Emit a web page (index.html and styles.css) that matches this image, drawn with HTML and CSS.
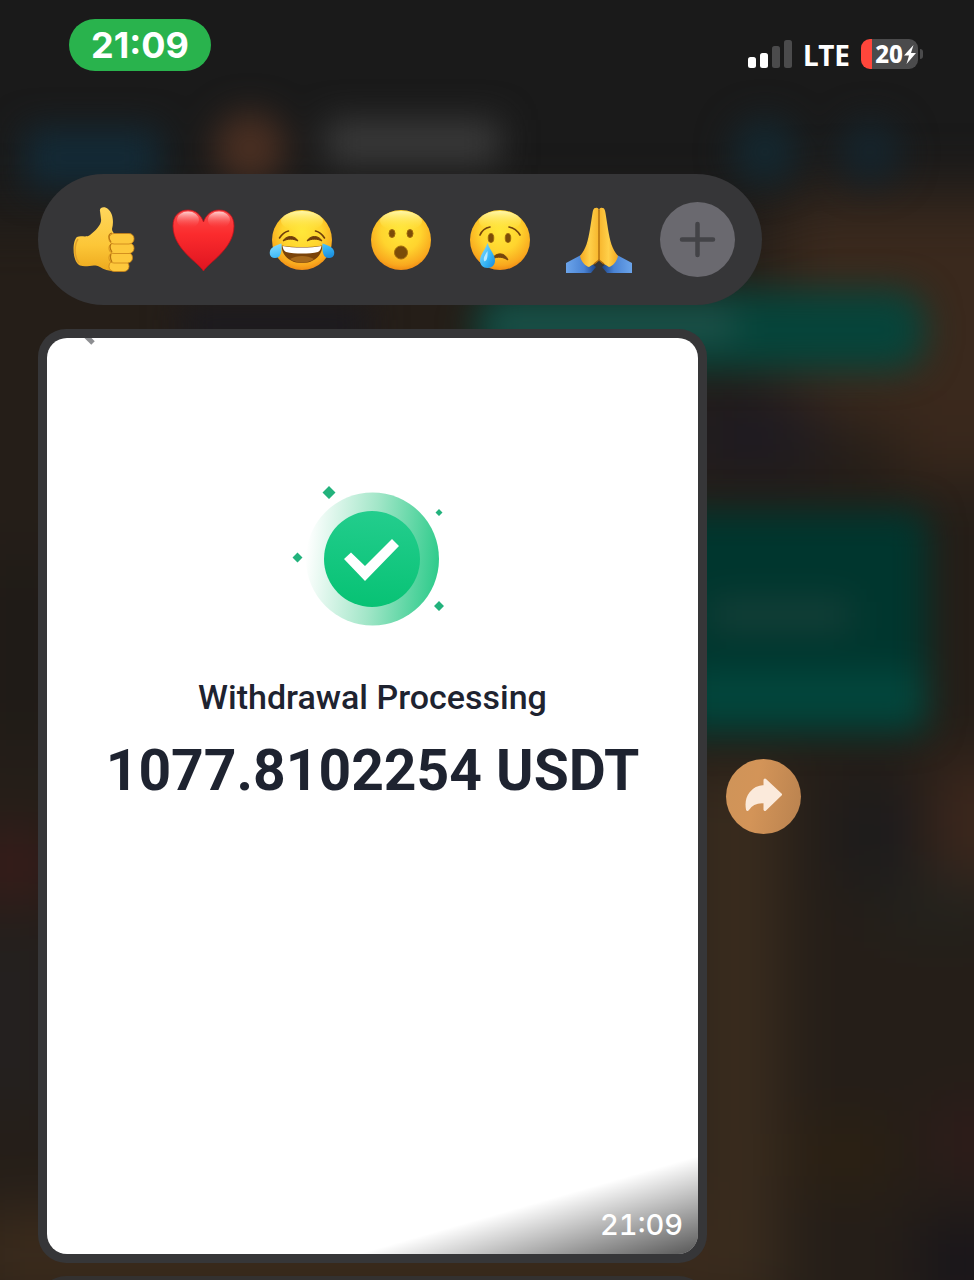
FILE: index.html
```html
<!DOCTYPE html>
<html lang="en">
<head>
<meta charset="utf-8">
<meta name="viewport" content="width=device-width, initial-scale=1">
<title>Message reactions</title>
<link rel="stylesheet" href="styles.css">
</head>
<body>
<div class="screen">
  <svg class="backdrop" viewBox="0 0 974 1280" preserveAspectRatio="none" aria-hidden="true">
    <defs>
      <filter id="soft" x="-50%" y="-50%" width="200%" height="200%" color-interpolation-filters="sRGB"><feGaussianBlur stdDeviation="17"/></filter>
      <filter id="softer" x="-60%" y="-60%" width="220%" height="220%" color-interpolation-filters="sRGB"><feGaussianBlur stdDeviation="30"/></filter>
    </defs>
    <rect width="974" height="1280" fill="#1a1a1a"/>
    <g filter="url(#softer)">
      <rect x="-80" y="215" width="1140" height="1150" fill="#251e18"/>
      <rect x="780" y="195" width="260" height="230" fill="#3a291d"/>
      <rect x="900" y="400" width="120" height="80" fill="#3a281c"/>
      <rect x="690" y="400" width="130" height="70" fill="#1d1a22"/>
      <rect x="690" y="770" width="90" height="540" fill="#3a2c1e"/>
      <rect x="840" y="780" width="80" height="110" fill="#1c1b1c"/>
      <rect x="930" y="760" width="90" height="120" fill="#3d271c"/>
      <rect x="880" y="880" width="120" height="50" fill="#22231e"/>
      <rect x="800" y="1130" width="90" height="50" fill="#2e2110"/>
      <rect x="940" y="1110" width="60" height="60" fill="#331a1b"/>
      <rect x="920" y="1220" width="90" height="90" fill="#18151a"/>
      <rect x="-20" y="560" width="80" height="180" fill="#1e1a17"/>
      <rect x="-30" y="840" width="80" height="50" fill="#401a1a"/>
      <rect x="-30" y="930" width="80" height="180" fill="#242020"/>
      <rect x="-30" y="1210" width="740" height="90" fill="#3b2b1c"/>
    </g>
    <g filter="url(#soft)">
      <rect x="25" y="128" width="135" height="60" fill="#132a36"/>
      <circle cx="250" cy="148" r="36" fill="#4a2f22"/>
      <rect x="325" y="120" width="175" height="45" fill="#3a3a3a"/>
      <circle cx="765" cy="152" r="34" fill="#14272f"/>
      <circle cx="870" cy="152" r="32" fill="#15242c"/>
      <rect x="180" y="305" width="190" height="40" fill="#1b1a20"/>
      <rect x="475" y="290" width="450" height="80" rx="30" fill="#06443a"/>
      <rect x="490" y="310" width="245" height="30" fill="#22524a"/>
      <rect x="600" y="510" width="328" height="225" rx="16" fill="#00362e"/>
      <rect x="710" y="600" width="140" height="30" fill="#163f38"/>
      <rect x="690" y="670" width="235" height="55" fill="#02463c"/>
    </g>
  </svg>

  <header class="status">
    <time class="clock">21:09</time>
    <div class="indicators">
      <svg class="signal" viewBox="0 0 44 28" role="img" aria-label="Signal, two bars">
        <rect x="0" y="17" width="8" height="11" rx="2.5" fill="#fff"/>
        <rect x="12" y="13" width="8" height="15" rx="2.5" fill="#fff"/>
        <rect x="24" y="6" width="8" height="22" rx="2.5" fill="#4b4b4c"/>
        <rect x="36" y="0" width="8" height="28" rx="2.5" fill="#4b4b4c"/>
      </svg>
      <span class="network">LTE</span>
      <div class="battery">
        <div class="cell">
          <span>20</span>
          <svg class="bolt" viewBox="0 0 12 19" aria-hidden="true"><path d="M9.500 0 0 10.500h5L2.500 19 12 8H7z" fill="#fff"/></svg>
        </div>
        <span class="nub"></span>
      </div>
    </div>
  </header>

  <main class="content">
    <div class="reactions">
      <button class="emoji" aria-label="Thumbs up">
        <svg viewBox="0 0 66 66" aria-hidden="true">
          <defs><linearGradient id="thumb" x1="0" y1="0" x2="0" y2="1"><stop offset="0" stop-color="#ffd65c"/><stop offset=".6" stop-color="#fcc637"/><stop offset="1" stop-color="#eda91e"/></linearGradient></defs>
          <path d="M29 4C28 0 34-1 37 2 42 6 43 15 41 22 41 26 46 29 51 32L55 61C48 65 36 65 29 60 22 56 17 61 9 58.500 1 55 1 34 6 30 10 28 15 31 19 28 25 23 31 17 30 12Z" fill="url(#thumb)"/>
          <path d="M7 32C3 38 3 50 8 56" fill="none" stroke="#e0a02a" stroke-width="1.500"/>
          <g fill="#fdc83c" stroke="#c98116" stroke-width=".8">
            <rect x="38" y="54" width="20" height="10.500" rx="5"/>
            <rect x="38" y="45.500" width="23.500" height="10.500" rx="5"/>
            <rect x="38" y="36" width="25" height="10.500" rx="5"/>
            <rect x="38" y="26.500" width="25" height="10.500" rx="5"/>
          </g>
          <path d="M41 26C37 27 37 31 40 35M40 37C38 40 39 42 41 45M40 47C39 50 39 52 41 55" fill="none" stroke="#b97512" stroke-width="1.200"/>
        </svg>
      </button>
      <button class="emoji" aria-label="Red heart">
        <svg viewBox="0 0 66 66" aria-hidden="true">
          <defs>
            <linearGradient id="heart" x1="0" y1="0" x2="0" y2="1"><stop offset="0" stop-color="#fb4a4a"/><stop offset=".4" stop-color="#fb2b2d"/><stop offset="1" stop-color="#de1420"/></linearGradient>
            <linearGradient id="shine" x1="0" y1="0" x2="0" y2="1"><stop offset="0" stop-color="#ffd0cf"/><stop offset="1" stop-color="#fb3a3b" stop-opacity="0"/></linearGradient>
          </defs>
          <path d="M33.500 64C29 56 3 42 3 19 3 9 9 3 18 3 26 3 31 8 33.500 15 36 8 41 3 49 3 58 3 64 9 64 19 64 42 38 56 33.500 64Z" fill="url(#heart)" stroke="#c3101b" stroke-width=".8"/>
          <ellipse cx="18" cy="13" rx="11" ry="8.500" fill="url(#shine)"/>
          <ellipse cx="49" cy="13" rx="11" ry="8.500" fill="url(#shine)"/>
        </svg>
      </button>
      <button class="emoji" aria-label="Tears of joy">
        <svg viewBox="0 0 66 66" aria-hidden="true">
          <defs>
            <radialGradient id="face" cx=".5" cy=".36" r=".66"><stop offset="0" stop-color="#ffe83a"/><stop offset=".5" stop-color="#ffd42e"/><stop offset=".85" stop-color="#f9a81e"/><stop offset="1" stop-color="#ee8512"/></radialGradient>
            <linearGradient id="gloss" x1="0" y1="0" x2="0" y2="1"><stop offset="0" stop-color="#fffbb8" stop-opacity=".9"/><stop offset="1" stop-color="#ffe93a" stop-opacity="0"/></linearGradient>
            <linearGradient id="drop" x1="0" y1="0" x2="1" y2="1"><stop offset="0" stop-color="#8fe0ff"/><stop offset=".6" stop-color="#35b4f5"/><stop offset="1" stop-color="#1686d8"/></linearGradient>
          </defs>
          <circle cx="33" cy="33" r="30" fill="url(#face)"/>
          <ellipse cx="33" cy="14" rx="21" ry="10" fill="url(#gloss)"/>
          <path d="M12.500 38.500C24 40.500 42 40.500 53.500 38.500 53 49 45 56 33 56S13 49 12.500 38.500Z" fill="#7a4309"/>
          <path d="M13.500 39C25 41 41 41 52.500 39 52 42 51 44 49 45 40 47 26 47 17 45 15 44 14 42 13.500 39Z" fill="#fff"/>
          <path d="M21 52C28 48 38 48 45 52 38 57 28 57 21 52Z" fill="#a6691c"/>
          <path d="M14 34C17 28 26 28 29 34 24 31.500 19 31.500 14 34ZM38 34C41 28 50 28 53 34 48 31.500 43 31.500 38 34Z" fill="#6f3d0b" stroke="#6f3d0b" stroke-width="1"/>
          <path d="M10.500 31C13 27 15 25 19.500 24M55.500 31C53 27 51 25 46.500 24" fill="none" stroke="#6f3d0b" stroke-width="1.600" stroke-linecap="round"/>
          <path d="M12.500 36.500C13 45 12 51 6 51 2 51 0 48 1 44 2 40 8 38 12.500 36.500ZM53.500 36.500C53 45 54 51 60 51 64 51 66 48 65 44 64 40 58 38 53.500 36.500Z" fill="url(#drop)"/>
        </svg>
      </button>
      <button class="emoji" aria-label="Surprised">
        <svg viewBox="0 0 66 66" aria-hidden="true">
          <circle cx="33" cy="33" r="30" fill="url(#face)"/>
          <ellipse cx="33" cy="14" rx="21" ry="10" fill="url(#gloss)"/>
          <g fill="#7b4c08" stroke="#a06a0c" stroke-width="1">
            <ellipse cx="24" cy="26.500" rx="3" ry="4"/>
            <ellipse cx="42" cy="26.500" rx="3" ry="4"/>
            <circle cx="33" cy="45.500" r="6.500"/>
          </g>
        </svg>
      </button>
      <button class="emoji" aria-label="Crying">
        <svg viewBox="0 0 66 66" aria-hidden="true">
          <circle cx="33" cy="33" r="30" fill="url(#face)"/>
          <ellipse cx="33" cy="14" rx="21" ry="10" fill="url(#gloss)"/>
          <g fill="#7b4c08" stroke="#a06a0c" stroke-width=".8">
            <ellipse cx="24" cy="31" rx="2.800" ry="4.600"/>
            <ellipse cx="41" cy="31" rx="2.800" ry="4.600"/>
          </g>
          <path d="M13 28C15 23 18 21 23 20M42 20C47 21 50 23 53 28" fill="none" stroke="#75450c" stroke-width="1.700" stroke-linecap="round"/>
          <path d="M25 52C29 45 38 45 41 53 36 50 31 49 25 52Z" fill="#75450c" stroke="#75450c" stroke-width="1" stroke-linejoin="round"/>
          <path d="M20.500 36C22 42 28 47 28 53.500 28 58 25 61 20.500 61S13 58 13 53.500C13 47 19 42 20.500 36Z" fill="url(#drop)"/>
          <path d="M20.500 44C18 48 16 51 17 54 19 55 21 52 20.500 44Z" fill="#d4f4ff" opacity=".8"/>
        </svg>
      </button>
      <button class="emoji" aria-label="Folded hands">
        <svg viewBox="0 0 66 66" aria-hidden="true">
          <defs>
            <linearGradient id="palm" x1="0" y1="0" x2="1" y2="0"><stop offset="0" stop-color="#f3a71f"/><stop offset=".5" stop-color="#ffd04a"/><stop offset="1" stop-color="#f7b52c"/></linearGradient>
            <linearGradient id="sleeve" x1="0" y1="0" x2="1" y2="0"><stop offset="0" stop-color="#6ba4ea"/><stop offset=".6" stop-color="#4a83d4"/><stop offset="1" stop-color="#1d4486"/></linearGradient>
            <g id="half">
              <path d="M0 56 15 48 30 60 25 66H0Z" fill="url(#sleeve)"/>
              <path d="M29.500 1C27.500 1 27 3 26.500 6L24 22C22 34 20 42 14 49 15 54 19 59 23 60 27 57 32 56 33 52V4C33 1 31 0 29.500 1Z" fill="url(#palm)"/>
            </g>
          </defs>
          <use href="#half"/>
          <use href="#half" transform="matrix(-1 0 0 1 66 0)"/>
          <path d="M33 3V53L28 57M33 53 38 57" fill="none" stroke="#a8660d" stroke-width="1.300"/>
        </svg>
      </button>
      <button class="more" aria-label="More reactions">
        <svg viewBox="0 0 75 75" aria-hidden="true"><path d="M37.500 22V53M22 37.500H53" stroke="#434347" stroke-width="4.500" stroke-linecap="round"/></svg>
      </button>
    </div>

    <div class="message">
      <article class="bubble">
        <div class="photo">
          <svg class="mark" viewBox="0 0 16 8" aria-hidden="true"><path d="M3-4 12 5" stroke="#8d8e91" stroke-width="5"/></svg>
          <svg class="success" viewBox="3 -1 200 170" role="img" aria-label="Success">
            <defs>
              <linearGradient id="ring" x1="0" y1=".45" x2="1" y2=".55"><stop offset="0" stop-color="#fff"/><stop offset=".5" stop-color="#a2e6c8"/><stop offset="1" stop-color="#2ecb8b"/></linearGradient>
              <linearGradient id="disc" x1=".5" y1="0" x2=".4" y2="1"><stop offset="0" stop-color="#23cd8d"/><stop offset="1" stop-color="#07c274"/></linearGradient>
            </defs>
            <circle cx="102.500" cy="89" r="66.500" fill="url(#ring)"/>
            <circle cx="102" cy="89" r="48" fill="url(#disc)"/>
            <path d="M74 89 81 82.500 95 96 122 69 129 76 95 111Z" fill="#fff"/>
            <path d="M59 16 65.500 22.500 59 29 52.500 22.500ZM169 39 172.500 42.500 169 46 165.500 42.500ZM27.500 82.500 32.500 87.500 27.500 92.500 22.500 87.500ZM169 131 174 136 169 141 164 136Z" fill="#22b27c"/>
          </svg>
          <h1 class="title">Withdrawal Processing</h1>
          <p class="amount">1077.8102254 USDT</p>
          <div class="shade"><time class="sent">21:09</time></div>
        </div>
      </article>
      <button class="share" aria-label="Forward">
        <svg viewBox="0 0 75 75" aria-hidden="true"><path d="M39 21 54.500 35.500 39 50.500V43C30 42 25 45 21.500 50.500 19 37 27 28 39 27.500Z" fill="#fbeadb" stroke="#fbeadb" stroke-width="3" stroke-linejoin="round"/></svg>
      </button>
    </div>
    <div class="menu"></div>
  </main>
</div>
</body>
</html>
```
FILE: styles.css
```css
* { box-sizing: border-box; }

body {
  margin: 0;
  background: #1a1a1a;
  font-family: Inter, "Liberation Sans", sans-serif;
  color: #fff;
}

button {
  flex: none;
  border: 0;
  padding: 0;
  background: none;
  cursor: pointer;
}

svg { display: block; }

.screen {
  position: relative;
  height: 100vh;
  overflow: hidden;
}

.backdrop {
  position: absolute;
  inset: 0;
  width: 100%;
  height: 100%;
  z-index: -1;
}

.status {
  display: flex;
  justify-content: space-between;
  align-items: flex-start;
  padding: 19px 51px 0 69px;
}

.clock {
  padding: 0 22px;
  border-radius: 26px;
  background: #29b34d;
  font-size: 36px;
  font-weight: 700;
  line-height: 52px;
}

.indicators {
  display: flex;
  align-items: center;
  gap: 11px;
  padding-top: 19px;
}

.signal { width: 44px; height: 28px; }

.network {
  padding-top: 2px;
  font: 700 28px/30px "Noto Sans", sans-serif;
}

.battery {
  display: flex;
  align-items: center;
  gap: 2px;
}

.cell {
  display: flex;
  align-items: center;
  justify-content: flex-end;
  gap: 1px;
  width: 57px;
  height: 30px;
  padding-right: 2px;
  border-radius: 9px;
  background: linear-gradient(to right, #ff463b 11px, #4b4b4c 11px);
  font: 800 24px/30px "Noto Sans", sans-serif;
}

.bolt { width: 12px; height: 19px; }

.nub {
  width: 3px;
  height: 10px;
  border-radius: 0 5px 5px 0;
  background: #4b4b4c;
}

.content { padding: 103px 38px 0; }

.reactions {
  display: flex;
  align-items: center;
  gap: 33px;
  max-width: 724px;
  height: 131px;
  padding: 0 28px 0 33px;
  border-radius: 66px;
  background: #363638;
}

.emoji { width: 66px; height: 66px; }

.more, .share {
  width: 75px;
  height: 75px;
  border-radius: 50%;
}

.more {
  margin-left: -5px;
  background: #6a696f;
}

.share { background: linear-gradient(100deg, #cf9459, #d39458 40%, #b9824f); }

.message {
  display: flex;
  align-items: center;
  gap: 19px;
  margin-top: 24px;
}

.bubble {
  flex: 0 1 669px;
  padding: 9px;
  border-radius: 28px;
  background: #363638;
}

.photo {
  position: relative;
  display: flex;
  flex-direction: column;
  align-items: center;
  aspect-ratio: 651 / 916;
  padding-top: 131px;
  border-radius: 20px;
  overflow: hidden;
  background: #fff;
  color: #1e2330;
}

.mark {
  position: absolute;
  top: 0;
  left: 34px;
  width: 16px;
  height: 8px;
}

.success { width: 200px; height: 170px; }

.title {
  margin: 38px 0 0;
  font: 500 34px/40px Roboto, sans-serif;
}

.amount {
  margin: 22px 0 0;
  font: 700 57px/64px Roboto, sans-serif;
  white-space: nowrap;
}

.shade {
  position: absolute;
  right: 0;
  bottom: 0;
  display: flex;
  align-items: flex-end;
  justify-content: flex-end;
  width: 340px;
  height: 98px;
  padding: 0 15px 11px;
  background: linear-gradient(to bottom right, transparent 50%, rgba(0, 0, 0, .66));
}

.sent {
  color: #fff;
  font-size: 29px;
  font-weight: 500;
  font-variant-numeric: tabular-nums;
  line-height: 36px;
}

.menu {
  max-width: 669px;
  height: 80px;
  margin-top: 13px;
  border-radius: 28px;
  background: #333130;
}
```
